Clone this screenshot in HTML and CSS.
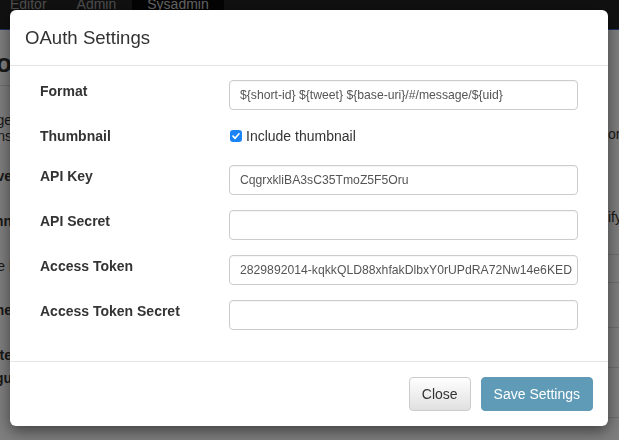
FILE: index.html
```html
<!DOCTYPE html>
<html>
<head>
<meta charset="utf-8">
<link rel="stylesheet" href="styles.css">
</head>
<body>
<div class="page">
  <nav class="navbar">
    <span class="nav-item first">Editor</span>
    <span class="nav-item second">Admin</span>
    <span class="nav-item active">Sysadmin</span>
  </nav>
  <div class="content">
    <div class="side left">
      <div class="frag heading">Info</div>
      <div class="rule"></div>
      <div class="frag p1">Manage</div>
      <div class="frag p2">Options</div>
      <div class="frag b s1">Save</div>
      <div class="frag b s2">Column</div>
      <div class="frag s3">Title l</div>
      <div class="frag b s4">Name</div>
      <div class="frag b s5">Write</div>
      <div class="frag b s6">Argu</div>
    </div>
    <div class="middle"></div>
    <div class="side right">
      <div class="frag r1">or</div>
      <div class="frag r2">ify</div>
      <div class="rline l1"></div>
      <div class="rline l2"></div>
      <div class="rline l3"></div>
      <div class="rline l4"></div>
      <div class="rline l5"></div>
    </div>
  </div>
</div>
<div class="backdrop"></div>
<div class="modal">
  <div class="modal-header">
    <h4 class="modal-title">OAuth Settings</h4>
  </div>
  <div class="modal-body">
    <div class="form-row">
      <label class="label">Format</label>
      <input class="input" type="text" value="${short-id} ${tweet} ${base-uri}/#/message/${uid}">
    </div>
    <div class="form-row check-row">
      <label class="label">Thumbnail</label>
      <label class="check">
        <span class="box"><svg viewBox="0 0 12 12" width="12" height="12"><path d="M3 6.2 L5.1 8.3 L9 3.8" fill="none" stroke="#fff" stroke-width="1.7" stroke-linecap="round" stroke-linejoin="round"/></svg></span>
        <span>Include thumbnail</span>
      </label>
    </div>
    <div class="form-row">
      <label class="label">API Key</label>
      <input class="input" type="text" value="CqgrxkliBA3sC35TmoZ5F5Oru">
    </div>
    <div class="form-row">
      <label class="label">API Secret</label>
      <input class="input" type="text" value="">
    </div>
    <div class="form-row">
      <label class="label">Access Token</label>
      <input class="input" type="text" value="2829892014-kqkkQLD88xhfakDlbxY0rUPdRA72Nw14e6KED">
    </div>
    <div class="form-row">
      <label class="label">Access Token Secret</label>
      <input class="input" type="text" value="">
    </div>
  </div>
  <div class="modal-footer">
    <button class="btn btn-default">Close</button>
    <button class="btn btn-primary">Save Settings</button>
  </div>
</div>
</body>
</html>
```

FILE: styles.css
```css
* { box-sizing: border-box; }
html, body { margin: 0; padding: 0; }
body {
  width: 619px;
  height: 440px;
  overflow: hidden;
  font-family: "Liberation Sans", Arial, sans-serif;
  font-size: 14px;
  color: #333;
  background: #fff;
}
.page { width: 619px; height: 440px; overflow: hidden; }
.navbar {
  height: 42px;
  margin-top: -12px;
  background: #222;
  border-bottom: 1px solid #4060c0;
  display: flex;
}
.nav-item {
  color: #9d9d9d;
  font-size: 14px;
  padding-top: 6px;
  line-height: 20px;
}
.nav-item.first { margin-left: 10px; }
.nav-item.second { margin-left: 30px; }
.nav-item.active {
  margin-left: 16px;
  background: #080808;
  color: #ccc;
  padding: 6px 15px 0 15px;
}
.content { display: flex; }
.side { display: flex; flex-direction: column; }
.left { width: 80px; margin-left: -68px; text-align: right; }
.middle { flex: 1; }
.right { width: 60px; margin-right: -49px; }
.frag { white-space: nowrap; line-height: 16px; }
.b { font-weight: bold; }
.heading { font-size: 26px; font-weight: bold; line-height: 30px; margin-top: 18px; }
.rule { height: 1px; background: #ddd; margin: 7px 0 0 0; }
.p1 { margin-top: 26px; }
.p2 { margin-top: 0; }
.s1 { margin-top: 24px; }
.s2 { margin-top: 29px; }
.s3 { margin-top: 29px; }
.s4 { margin-top: 28px; }
.s5 { margin-top: 29px; }
.s6 { margin-top: 7px; }
.r1 { margin-top: 96px; }
.r2 { margin-top: 67px; }
.rline { height: 1px; background: #ddd; }
.l1 { margin-top: 29px; }
.l2 { margin-top: 27px; }
.l3 { margin-top: 44px; }
.l4 { margin-top: 39px; }
.l5 { margin-top: 49px; }

.backdrop {
  position: fixed;
  inset: 0;
  background: rgba(0, 0, 0, 0.5);
}
.modal {
  position: absolute;
  left: 10px;
  top: 10px;
  width: 598px;
  height: 416px;
  background: #fff;
  border-radius: 6px;
  box-shadow: 0 5px 15px rgba(0, 0, 0, 0.5);
  display: flex;
  flex-direction: column;
}
.modal-header {
  padding: 15px;
  border-bottom: 1px solid #e5e5e5;
  height: 56px;
}
.modal-title {
  margin: 0;
  font-size: 18.6px;
  font-weight: normal;
  line-height: 26px;
  color: #333;
}
.modal-body {
  padding: 14px 30px 31px 30px;
  display: flex;
  flex-direction: column;
  gap: 15px;
  border-bottom: 1px solid #e5e5e5;
}
.form-row {
  display: grid;
  grid-template-columns: 189px 1fr;
  align-items: start;
}
.label {
  font-weight: bold;
  line-height: 20px;
  color: #333;
}
.input {
  height: 30px;
  width: 349px;
  border: 1px solid #ccc;
  border-radius: 4px;
  padding: 5px 4px 5px 10px;
  font-family: "Liberation Sans", Arial, sans-serif;
  font-size: 12.2px;
  color: #555;
  background: #fff;
  outline: none;
  box-shadow: inset 0 1px 1px rgba(0,0,0,0.04);
}
.check-row { height: 25px; }
.label, .check { padding-top: 1px; }
.check {
  display: flex;
  align-items: center;
  gap: 4px;
  line-height: 20px;
  color: #333;
}
.box {
  width: 12px;
  height: 12px;
  border-radius: 3px;
  background: #1a84f6;
  display: flex;
  margin-left: 1px;
}
.modal-footer {
  padding: 15px;
  display: flex;
  justify-content: flex-end;
  gap: 10px;
  flex: 1;
  align-items: flex-start;
}
.btn {
  height: 34px;
  font-family: "Liberation Sans", Arial, sans-serif;
  font-size: 14px;
  border-radius: 4px;
  padding: 6px 12px;
  line-height: 20px;
  white-space: nowrap;
}
.btn-default {
  min-width: 61px;
  color: #333;
  background: linear-gradient(#fff, #e0e0e0);
  border: 1px solid #ccc;
}
.btn-primary {
  min-width: 112px;
  color: #fff;
  background: #5f9bb7;
  border: 1px solid #5f9bb7;
}
```
